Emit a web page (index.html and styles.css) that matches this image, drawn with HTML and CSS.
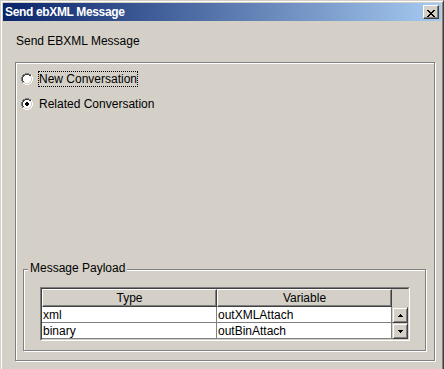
FILE: index.html
```html
<!DOCTYPE html>
<html>
<head>
<meta charset="utf-8">
<link rel="stylesheet" href="styles.css">
</head>
<body>
<div class="window">
  <div class="titlebar">
    <span class="title">Send ebXML Message</span>
    <button class="close" aria-label="Close">
      <svg width="8" height="7" viewBox="0 0 8 7" shape-rendering="crispEdges">
        <path d="M0 0h2v1H0zM6 0h2v1H6zM1 1h2v1H1zM5 1h2v1H5zM2 2h4v1H2zM3 3h2v1H3zM2 4h4v1H2zM1 5h2v1H1zM5 5h2v1H5zM0 6h2v1H0zM6 6h2v1H6z" fill="#000"/>
      </svg>
    </button>
  </div>
  <div class="content">
    <div class="heading">Send EBXML Message</div>
    <div class="panel">
      <div class="option">
        <svg class="radio" width="12" height="12" viewBox="0 0 12 12" shape-rendering="crispEdges">
          <path d="M4 0h4v1H4zM2 1h2v1H2zM8 1h2v1H8zM1 2h1v2H1zM0 4h1v4H0zM1 8h1v2H1z" fill="#808080"/>
          <path d="M10 2h1v2h-1zM11 4h1v4h-1zM10 8h1v2h-1zM2 10h2v1H2zM8 10h2v1H8zM4 11h4v1H4z" fill="#fff"/>
          <path d="M4 1h4v1H4zM2 2h2v1H2zM8 2h2v1H8zM2 3h1v1H2zM1 4h1v4H1zM2 8h1v1H2z" fill="#404040"/>
          <path d="M9 3h1v1H9zM10 4h1v4h-1zM9 8h1v1H9zM2 9h2v1H2zM8 9h2v1H8zM4 10h4v1H4z" fill="#d4d0c8"/>
          <path d="M4 2h4v1H4zM3 3h6v1H3zM2 4h8v4H2zM3 8h6v1H3zM4 9h4v1H4z" fill="#fff"/>
        </svg>
        <span class="option-label focused">New Conversation</span>
      </div>
      <div class="option">
        <svg class="radio" width="12" height="12" viewBox="0 0 12 12" shape-rendering="crispEdges">
          <path d="M4 0h4v1H4zM2 1h2v1H2zM8 1h2v1H8zM1 2h1v2H1zM0 4h1v4H0zM1 8h1v2H1z" fill="#808080"/>
          <path d="M10 2h1v2h-1zM11 4h1v4h-1zM10 8h1v2h-1zM2 10h2v1H2zM8 10h2v1H8zM4 11h4v1H4z" fill="#fff"/>
          <path d="M4 1h4v1H4zM2 2h2v1H2zM8 2h2v1H8zM2 3h1v1H2zM1 4h1v4H1zM2 8h1v1H2z" fill="#404040"/>
          <path d="M9 3h1v1H9zM10 4h1v4h-1zM9 8h1v1H9zM2 9h2v1H2zM8 9h2v1H8zM4 10h4v1H4z" fill="#d4d0c8"/>
          <path d="M4 2h4v1H4zM3 3h6v1H3zM2 4h8v4H2zM3 8h6v1H3zM4 9h4v1H4z" fill="#fff"/>
          <path d="M5 4h2v1H5zM4 5h4v2H4zM5 7h2v1H5z" fill="#000"/>
        </svg>
        <span class="option-label">Related Conversation</span>
      </div>
      <div class="group">
        <div class="group-title">Message Payload</div>
        <div class="table">
          <div class="table-inner">
            <div class="th">Type</div>
            <div class="th">Variable</div>
            <div class="corner"></div>
            <div class="td">xml</div>
            <div class="td">outXMLAttach</div>
            <div class="scroll">
              <div class="sbtn">
                <svg width="5" height="3" viewBox="0 0 5 3" shape-rendering="crispEdges"><path d="M2 0h1v1H2zM1 1h3v1H1zM0 2h5v1H0z" fill="#000"/></svg>
              </div>
              <div class="sbtn">
                <svg width="5" height="3" viewBox="0 0 5 3" shape-rendering="crispEdges"><path d="M0 0h5v1H0zM1 1h3v1H1zM2 2h1v1H2z" fill="#000"/></svg>
              </div>
            </div>
            <div class="td">binary</div>
            <div class="td">outBinAttach</div>
          </div>
        </div>
      </div>
    </div>
  </div>
</div>
</body>
</html>
```
FILE: styles.css
```css
html, body {
  margin: 0;
  padding: 0;
  background: #d4d0c8;
  overflow: hidden;
}

body {
  font-family: "Liberation Sans", Arial, sans-serif;
  font-size: 12px;
  color: #000;
}

.window {
  box-sizing: border-box;
  width: 444px;
  height: 373px;
  border: 1px solid;
  border-color: #d4d0c8 #404040 #404040 #d4d0c8;
  box-shadow: inset 1px 1px 0 #fff, inset -1px -1px 0 #808080;
  padding: 2px;
  display: flex;
  flex-direction: column;
  background: #d4d0c8;
}

.titlebar {
  height: 18px;
  flex: none;
  display: flex;
  align-items: center;
  padding: 0 2px;
  background: linear-gradient(to right, #0a246a, #a6caf0);
}

.title {
  flex: 1;
  color: #fff;
  font-weight: bold;
  font-size: 12px;
  line-height: 18px;
  letter-spacing: -0.35px;
  white-space: nowrap;
}

.close {
  width: 16px;
  height: 14px;
  box-sizing: border-box;
  margin: 0;
  padding: 2px 0 0 3px;
  border: 1px solid;
  border-color: #fff #404040 #404040 #fff;
  box-shadow: inset -1px -1px 0 #808080;
  background: #d4d0c8;
  display: block;
}

.close svg {
  display: block;
}

.content {
  flex: 1;
  padding: 13px 0 0 12px;
}

.heading {
  padding-left: 1px;
  line-height: 15px;
}

.panel {
  margin-top: 13px;
  width: 420px;
  height: 299px;
  box-sizing: border-box;
  border: 1px solid #808080;
  box-shadow: inset 1px 1px 0 #fff, 1px 1px 0 #fff;
  padding: 8px 8px 9px 5px;
  display: flex;
  flex-direction: column;
}

.option {
  display: flex;
  align-items: center;
  height: 16px;
}

.option + .option {
  margin-top: 9px;
}

.radio {
  display: block;
  flex: none;
  margin-right: 5px;
}

.option-label {
  border: 1px solid transparent;
  line-height: 14px;
  white-space: nowrap;
}

.option-label.focused {
  border: 1px dotted #000;
}

.group {
  margin-top: auto;
  margin-left: 2px;
  border: 1px solid #808080;
  box-shadow: inset 1px 1px 0 #fff, 1px 1px 0 #fff;
  padding: 0 0 9px 0;
  display: flex;
  flex-direction: column;
}

.group-title {
  align-self: flex-start;
  margin: -9px 0 0 4px;
  padding: 0 2px;
  background: #d4d0c8;
  line-height: 15px;
}

.table {
  margin: 11px 0 0 16px;
  width: 370px;
  height: 54px;
  box-sizing: border-box;
  border: 1px solid;
  border-color: #808080 #fff #fff #808080;
}

.table-inner {
  height: 100%;
  box-sizing: border-box;
  border: 1px solid;
  border-color: #404040 #d4d0c8 #d4d0c8 #404040;
  display: grid;
  grid-template-columns: 175px 175px 16px;
  grid-template-rows: 18px 16px 16px;
  background: #d4d0c8;
}

.th {
  box-sizing: border-box;
  border: 1px solid;
  border-color: #fff #404040 #404040 #fff;
  box-shadow: inset -1px -1px 0 #808080;
  text-align: center;
  line-height: 16px;
  background: #d4d0c8;
}

.corner {
  background: #d4d0c8;
}

.td {
  box-sizing: border-box;
  background: #fff;
  border-right: 1px solid #808080;
  border-bottom: 1px solid #808080;
  padding: 1px 0 0 1px;
  line-height: 14px;
  white-space: nowrap;
  overflow: hidden;
}

.scroll {
  grid-column: 3;
  grid-row: 2 / 4;
  display: flex;
  flex-direction: column;
}

.sbtn {
  height: 16px;
  box-sizing: border-box;
  border: 1px solid;
  border-color: #d4d0c8 #404040 #404040 #d4d0c8;
  box-shadow: inset 1px 1px 0 #fff, inset -1px -1px 0 #808080;
  background: #d4d0c8;
  display: flex;
  align-items: center;
  justify-content: center;
}

.sbtn svg {
  display: block;
}
```
